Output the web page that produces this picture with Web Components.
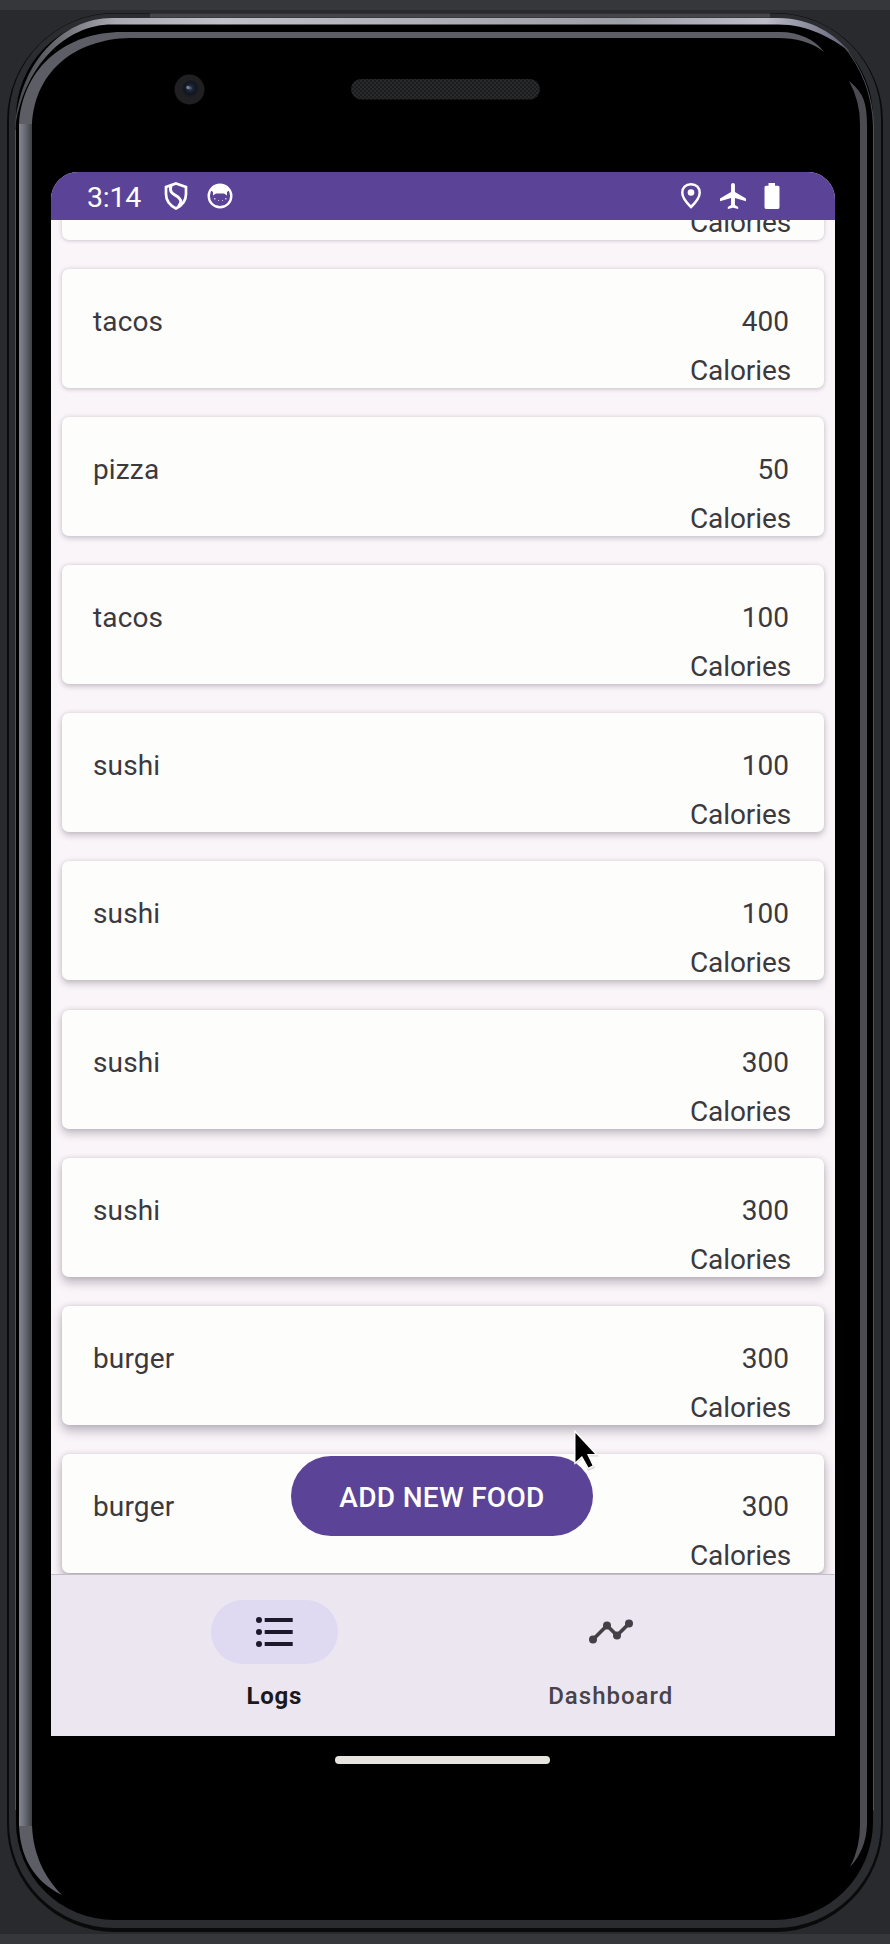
<!DOCTYPE html>
<html lang="en">
<head>
<meta charset="utf-8">
<title>Food log</title>
<style>
html,body{margin:0;padding:0;background:#292a2d}
body{width:890px;height:1944px;overflow:hidden;font-family:Roboto,"Liberation Sans",sans-serif}
</style>
</head>
<body>
<phone-frame>
  <status-bar></status-bar>
  <food-list>
    <food-card name="" calories=""></food-card>
    <food-card name="tacos" calories="400" depth="1"></food-card>
    <food-card name="pizza" calories="50" depth="2"></food-card>
    <food-card name="tacos" calories="100" depth="3"></food-card>
    <food-card name="sushi" calories="100" depth="4"></food-card>
    <food-card name="sushi" calories="100" depth="5"></food-card>
    <food-card name="sushi" calories="300" depth="6"></food-card>
    <food-card name="sushi" calories="300" depth="7"></food-card>
    <food-card name="burger" calories="300" depth="8"></food-card>
    <food-card name="burger" calories="300" depth="9"></food-card>
    <add-button slot="action">ADD NEW FOOD</add-button>
  </food-list>
  <nav-bar>
    <nav-item active>
      <svg slot="icon" width="37" height="30" viewBox="0 0 37 30" fill="#1d192b"><circle cx="3" cy="3" r="3"/><circle cx="3" cy="15" r="3"/><circle cx="3" cy="27" r="3"/><path d="M8.700 1h28v4h-28zM8.700 13h28v4h-28zM8.700 25h28v4h-28z"/></svg>
      Logs
    </nav-item>
    <nav-item>
      <svg slot="icon" width="44" height="26" viewBox="0 0 44 26"><path d="M4 20.500 18 6.500 28 16.500 40 4.500" fill="none" stroke="#444046" stroke-width="3.600"/><g fill="#444046"><circle cx="4" cy="20.500" r="4"/><circle cx="18" cy="6.500" r="4"/><circle cx="28" cy="16.500" r="4"/><circle cx="40" cy="4.500" r="4"/></g></svg>
      Dashboard
    </nav-item>
  </nav-bar>
</phone-frame>
<script>
const define=(name,html,setup)=>customElements.define(name,class extends HTMLElement{
  constructor(){
    super();
    const t=document.createElement('template');
    t.innerHTML=html;
    this.attachShadow({mode:'open'}).append(t.content.cloneNode(true));
  }
  connectedCallback(){if(setup)setup(this,this.shadowRoot)}
});

define('phone-frame',`
<style>
:host{display:block;position:relative;width:890px;height:1944px;box-sizing:border-box;padding:172px 55px 0 51px;overflow:hidden}
.shell{position:absolute;left:0;top:0}
.screen{position:relative;width:784px;height:1564px;display:flex;flex-direction:column;border-radius:27px 27px 0 0;overflow:hidden;background:#faf5f9}
.home{position:relative;width:215px;height:8px;border-radius:4px;background:#e6e4df;margin:20px 0 0 284px}
.pointer{position:absolute;left:571px;top:1428px}
</style>
<svg class="shell" width="890" height="1944" viewBox="0 0 890 1944">
  <defs>
    <linearGradient id="rim" x1="19" y1="0" x2="32" y2="0" gradientUnits="userSpaceOnUse"><stop offset="0" stop-color="#85858f"/><stop offset=".4" stop-color="#6d6f78"/><stop offset="1" stop-color="#3e4044"/></linearGradient>
    <linearGradient id="top" x1="0" y1="0" x2="890" y2="0" gradientUnits="userSpaceOnUse"><stop offset="0" stop-color="#3a3b40"/><stop offset=".06" stop-color="#66676d"/><stop offset=".13" stop-color="#aaaab4"/><stop offset=".25" stop-color="#c0c0c9"/><stop offset=".7" stop-color="#9d9fa7"/><stop offset=".86" stop-color="#bcbdc9"/><stop offset=".93" stop-color="#77788a"/><stop offset="1" stop-color="#303138"/></linearGradient>
    <pattern id="mesh" width="4" height="4" patternUnits="userSpaceOnUse"><rect width="4" height="4" fill="#1c1c1d"/><path d="M0 0h2v2H0zM2 2h2v2H2z" fill="#292a2c"/></pattern>
    <radialGradient id="lens" cx=".45" cy=".45" r=".55"><stop offset="0" stop-color="#56617b"/><stop offset=".25" stop-color="#202838"/><stop offset=".6" stop-color="#11171f"/><stop offset="1" stop-color="#202022"/></radialGradient>
  </defs>
  <rect width="890" height="10" fill="#36373a"/><rect y="1934" width="890" height="10" fill="#36373a"/>
  <rect x="7" y="13" width="876" height="1919" rx="108" fill="#0a0a0b"/>
  <rect x="9" y="13.500" width="872" height="1914.500" rx="105" fill="#2b2c30"/>
  <path d="M150 15.500H770" stroke="#46464a" stroke-width="4"/>
  <rect x="16" y="19" width="857" height="1901" rx="98" fill="#000"/>
  <path d="M15 130C18 64 62 18 112 18H778C812 18 835 35 850 52C832 38 808 24.500 778 24.500H112C65 24.500 23 67 15 130Z" fill="url(#top)"/>
  <path d="M15.500 1810V130M873.500 1810V126Q872 79 842 44" fill="none" stroke="#50515a" stroke-width="1"/>
  <path d="M19 1825V124C23 66 67 32 122 32H780C798 32 815 39 824 52C812 42 795 38 778 38H130C75 39 32 72 32 130V1825C33 1855 45 1878 62 1895C35 1882 20 1858 19 1825Z" fill="#5c5d65"/>
  <rect x="19" y="124" width="13" height="1702" fill="url(#rim)"/>
  <path d="M849 81C861 91 867 99 867 124V1825Q866 1850 850 1867Q860 1848 860 1825V124Q860 101 849 81Z" fill="#4b4b51"/>
  <circle cx="189.500" cy="89.500" r="15" fill="#202022"/><circle cx="191" cy="89" r="9" fill="url(#lens)"/><circle cx="188" cy="87.500" r="1.700" fill="#77819a"/>
  <rect x="351" y="79" width="189" height="20.500" rx="10" fill="url(#mesh)"/>
</svg>
<div class="screen"><slot></slot></div>
<div class="home"></div>
<svg class="pointer" width="32" height="44" viewBox="0 0 32 44"><path d="M4.500 4V37L11.500 30.500 17 43 24 40 18.500 28.500H28Z" fill="#aaa" opacity=".4"/><path d="M4.500 5V34L11 28L17.500 39.500L21.500 37.500L16 26H24Z" fill="#000" stroke="#fff" stroke-width="2.500" paint-order="stroke"/></svg>`);

define('status-bar',`
<style>
:host{display:flex;flex:none;height:48px;box-sizing:border-box;align-items:center;padding:0 55px 0 36px;background:#5b4397;color:#fff;font-size:28.500px;position:relative;z-index:2}
.time{width:77px;line-height:46px;padding-top:3px;box-sizing:border-box;letter-spacing:-.2px}
svg{display:block}.grow{flex:1}
</style>
<span class="time">3:14</span>
<svg width="24" height="28" viewBox="0 0 24 28" fill="none" stroke="#fff" stroke-width="2.700"><path d="M12 1.500 22 5V12C22 19 18 23.500 12 26.500 6 23.500 2 19 2 12V5Z"/><path d="M7 3.500C4.500 12 11 12 15 16C18 19 17 21 14.500 24.500" stroke-width="3"/></svg>
<svg style="margin-left:19px" width="26" height="26" viewBox="0 0 26 26"><circle cx="13" cy="13" r="11.300" fill="none" stroke="#fff" stroke-width="2.400"/><path d="M3.500 7C9 0 17 0 22.500 7L20 9V12.500L17 10.500H9L6 12.500V9Z" fill="#fff"/><path d="M7 15h1.500v1.500H7zM18 15h1.500v1.500H18zM11 17h1v1h-1zM15 17h1v1h-1z" fill="#c9bdea"/></svg>
<span class="grow"></span>
<svg width="20" height="26" viewBox="0 0 20 26"><path d="M10 1.300C4.500 1.300 1.300 5 1.300 9.700 1.300 15.500 10 24 10 24S18.700 15.500 18.700 9.700C18.700 5 15.500 1.300 10 1.300Z" fill="none" stroke="#fff" stroke-width="2.500"/><circle cx="10" cy="9.500" r="3.300" fill="#fff"/></svg>
<svg style="margin-left:19px" width="26" height="26" viewBox="2 2 20 20" preserveAspectRatio="none"><path d="M22 16v-2l-8.500-5V3.500C13.500 2.670 12.830 2 12 2s-1.500.67-1.500 1.500V9L2 14v2l8.500-2.500V19L8 20.500V22l4-1 4 1v-1.500L13.500 19v-5.500L22 16z" fill="#fff"/></svg>
<svg style="margin-left:18px" width="16" height="26" viewBox="0 0 16 26"><path d="M4.500 0H11V2.700H14Q15.500 2.700 15.500 4.500V24Q15.500 26 14 26H2Q.5 26 .5 24V4.500Q.5 2.700 2 2.700H4.500Z" fill="#fff"/></svg>`);

define('food-list',`
<style>
:host{display:block;position:relative;height:1354px;overflow:hidden}
.items{display:flex;flex-direction:column;gap:29.100px;margin-top:-99px;padding:0 11px}
.action{position:absolute;left:240px;top:1236px}
</style>
<div class="items"><slot></slot></div>
<div class="action"><slot name="action"></slot></div>`);

define('food-card',`
<style>
:host{display:block;box-sizing:border-box;height:119px;border-radius:7px;background:#fdfdfc;color:#3b393e;font-size:28px;
  box-shadow:0 var(--y) var(--b) rgba(60,52,70,var(--a)),0 0 5px rgba(80,70,90,.16);padding:31px 33px 0 31px}
.row{display:flex;justify-content:space-between;line-height:44px;height:49px;padding-right:2px}
.name{letter-spacing:.15px}
.unit{text-align:right;line-height:44px;letter-spacing:-.1px}
</style>
<div class="row"><span class="name"></span><span class="amount"></span></div>
<div class="unit">Calories</div>`,(el,root)=>{
  root.querySelector('.name').textContent=el.getAttribute('name');
  root.querySelector('.amount').textContent=el.getAttribute('calories');
  const d=+(el.getAttribute('depth')||0);
  el.style.setProperty('--y',(1+d*.6)+'px');
  el.style.setProperty('--b',(3+d*.9)+'px');
  el.style.setProperty('--a',(.12+d*.025));
});

define('add-button',`
<style>
:host{display:flex;align-items:center;justify-content:center;width:302px;height:80px;border-radius:40px;background:#5b4397;color:#fff;font-size:28px;font-weight:500;letter-spacing:.3px;line-height:80px;box-sizing:border-box;padding-top:3px;white-space:nowrap}
</style><slot></slot>`);

define('nav-bar',`
<style>
:host{display:flex;flex:none;height:162px;box-sizing:border-box;padding:0 56px 0 55px;background:#ece6f1;position:relative;border-top:1px solid #c3bdc8}
</style><slot></slot>`);

define('nav-item',`
<style>
:host{flex:1;display:flex;flex-direction:column;align-items:center;padding-top:25px;color:#47434a;font-size:24px;font-weight:500;letter-spacing:1px}
.pill{width:127px;height:64px;border-radius:32px;display:flex;align-items:center;justify-content:center}
:host([active]) .pill{background:#dfdaf2}
:host([active]){color:#1b191d;font-weight:700;letter-spacing:.7px}
.label{line-height:32px;margin-top:16px}
</style>
<div class="pill"><slot name="icon"></slot></div><div class="label"><slot></slot></div>`);
</script>
</body>
</html>
